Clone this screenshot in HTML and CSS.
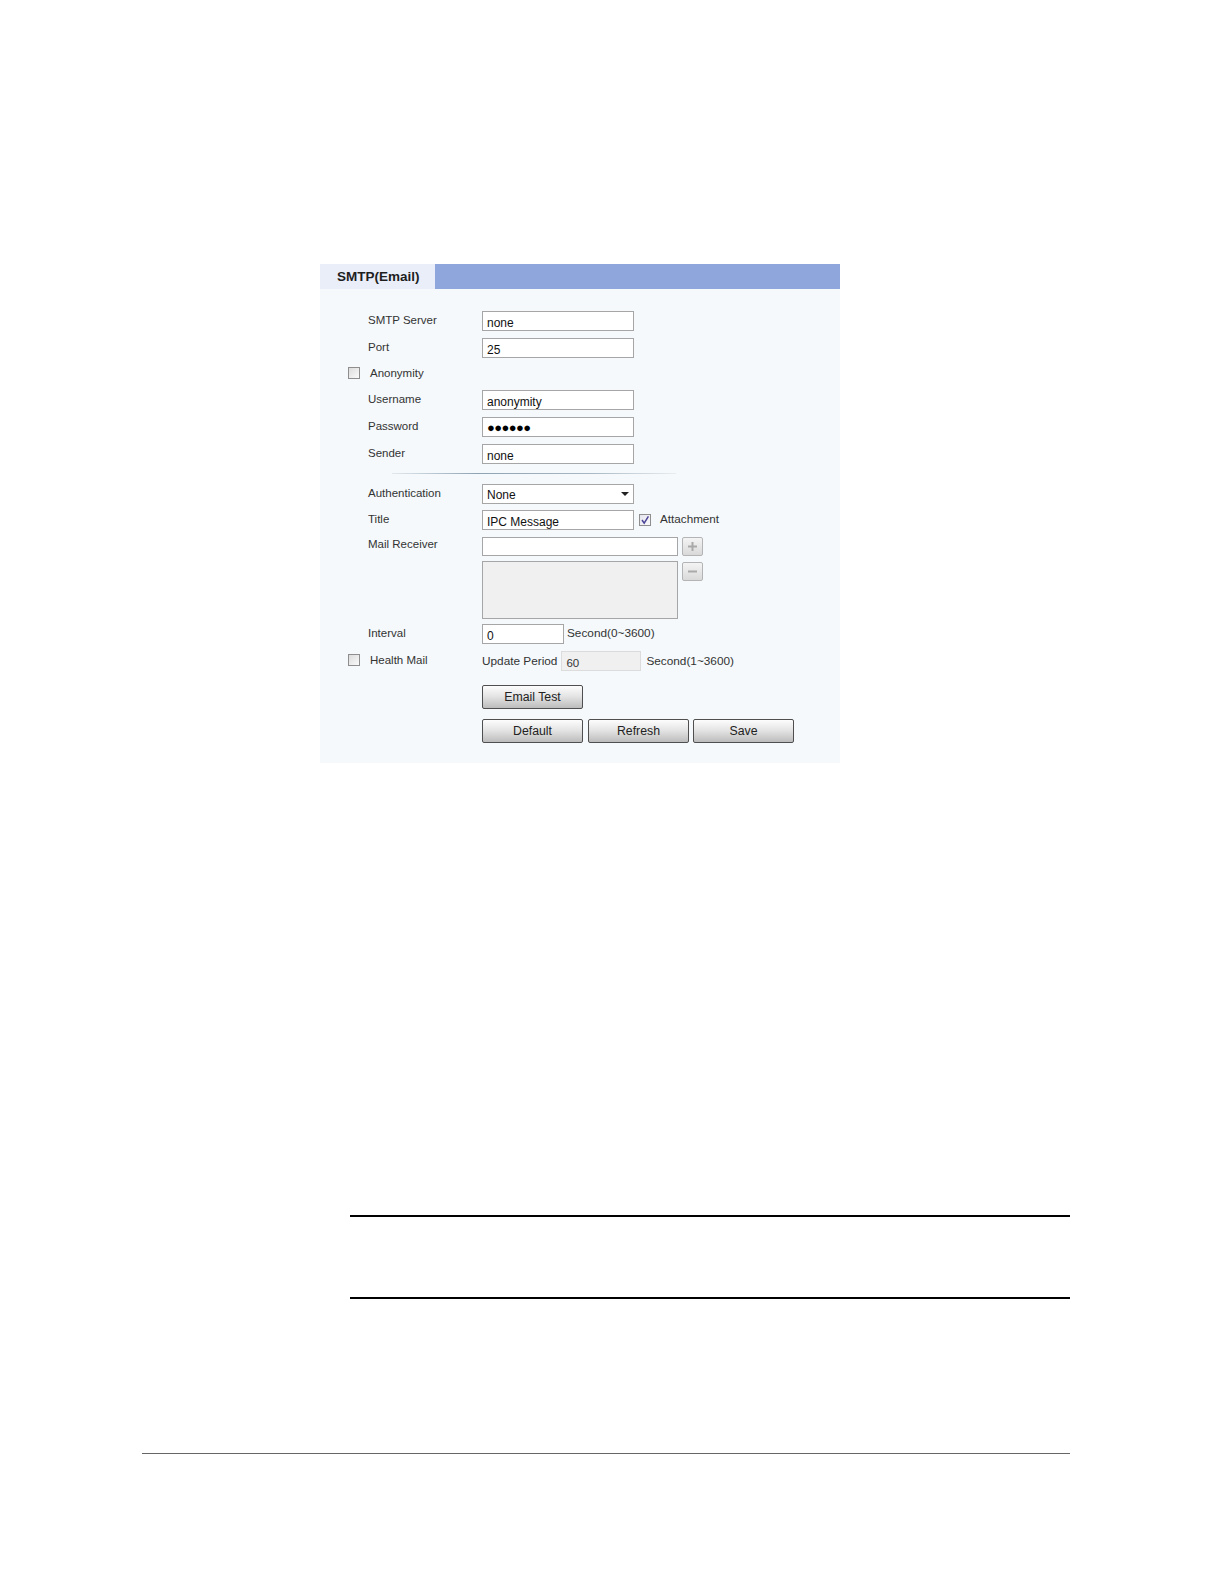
FILE: index.html
```html
<!DOCTYPE html>
<html>
<head>
<meta charset="utf-8">
<title>SMTP(Email)</title>
<link rel="stylesheet" href="styles.css">
</head>
<body>
<div class="page">
  <div class="panel">
    <div class="panel-head">
      <div class="tab">SMTP(Email)</div>
    </div>
    <div class="panel-body">
      <div class="row">
        <div class="label">SMTP Server</div>
        <div class="input w152">none</div>
      </div>
      <div class="row">
        <div class="label">Port</div>
        <div class="input w152">25</div>
      </div>
      <div class="row short">
        <div class="label check-label"><span class="cb"></span><span>Anonymity</span></div>
      </div>
      <div class="row">
        <div class="label">Username</div>
        <div class="input w152">anonymity</div>
      </div>
      <div class="row">
        <div class="label">Password</div>
        <div class="input w152 dots">&#9679;&#9679;&#9679;&#9679;&#9679;&#9679;</div>
      </div>
      <div class="row">
        <div class="label">Sender</div>
        <div class="input w152">none</div>
      </div>
      <div class="sep"></div>
      <div class="row auth">
        <div class="label">Authentication</div>
        <div class="input w152 select">None<span class="caret"></span></div>
      </div>
      <div class="row">
        <div class="label">Title</div>
        <div class="input w152">IPC Message</div>
        <span class="cb checked"><svg viewBox="0 0 10 10" width="10" height="10"><path d="M2 5 L4.2 8.2 L8.4 1.4" fill="none" stroke="#4b4597" stroke-width="1.5"/></svg></span>
        <span class="after">Attachment</span>
      </div>
      <div class="row recv">
        <div class="label">Mail Receiver</div>
        <div class="input w196"></div>
        <span class="mini"><svg viewBox="0 0 19 17" width="19" height="17"><path d="M5 8.5 H14 M9.5 4 V13" stroke="#a9a9a9" stroke-width="2"/></svg></span>
      </div>
      <div class="row list-row">
        <div class="label"></div>
        <div class="listbox"></div>
        <span class="mini"><svg viewBox="0 0 19 17" width="19" height="17"><path d="M5 8.5 H14" stroke="#a9a9a9" stroke-width="2"/></svg></span>
      </div>
      <div class="row">
        <div class="label">Interval</div>
        <div class="input w82">0</div>
        <span class="after3">Second(0~3600)</span>
      </div>
      <div class="row">
        <div class="label check-label"><span class="cb"></span><span>Health Mail</span></div>
        <span class="plain">Update Period</span>
        <div class="input w80 disabled">60</div>
        <span class="after5">Second(1~3600)</span>
      </div>
      <div class="row btn-row first">
        <div class="label"></div>
        <button class="btn">Email Test</button>
      </div>
      <div class="row btn-row">
        <div class="label"></div>
        <button class="btn">Default</button>
        <button class="btn">Refresh</button>
        <button class="btn">Save</button>
      </div>
    </div>
  </div>
  <div class="note"></div>
  <div class="footer-line"></div>
</div>
</body>
</html>
```

FILE: styles.css
```css
html, body {
  margin: 0;
  padding: 0;
  background: #ffffff;
}
.page {
  padding-top: 264px;
  font-family: "Liberation Sans", Arial, sans-serif;
}
.panel {
  margin-left: 320px;
  width: 520px;
  background: #f5f9fb;
}
.panel-head {
  height: 25px;
  background: #8fa6dc;
  display: flex;
}
.tab {
  width: 115px;
  background: #e9eef9;
  box-sizing: border-box;
  padding-left: 17px;
  font-size: 13.5px;
  font-weight: bold;
  color: #1e1e1e;
  line-height: 26px;
}
.panel-body {
  padding: 22px 0 20px 0;
}
.row {
  display: flex;
  align-items: center;
  height: 20px;
  margin-bottom: 7px;
}
.row.short {
  height: 18px;
}
.row.auth {
  height: 20px;
  margin-bottom: 6px;
}
.row.recv {
  height: 19px;
  margin-bottom: 5px;
  align-items: flex-start;
}
.row.list-row {
  height: 58px;
  align-items: flex-start;
  margin-bottom: 5px;
}
.label {
  width: 162px;
  flex: none;
  box-sizing: border-box;
  padding-left: 48px;
  font-size: 11.5px;
  color: #333;
  margin-top: -2px;
}
.recv .label {
  margin-top: 1px;
}
.check-label {
  padding-left: 28px;
  display: flex;
  align-items: center;
}
.check-label .cb {
  margin-right: 10px;
}
.input {
  height: 20px;
  box-sizing: border-box;
  border: 1px solid #a6a6a6;
  background: #fff;
  font-size: 12px;
  color: #111;
  padding: 4px 0 0 4px;
  line-height: 14px;
  position: relative;
}
.w152 { width: 152px; }
.w196 { width: 196px; height: 19px; }
.w82 { width: 82px; }
.w80 { width: 80px; }
.dots {
  font-size: 13px;
  letter-spacing: -0.6px;
  padding-top: 3px;
  color: #000;
}
.select {
  padding-top: 3px;
}
.caret {
  position: absolute;
  right: 4px;
  top: 7px;
  width: 0;
  height: 0;
  border-left: 4px solid transparent;
  border-right: 4px solid transparent;
  border-top: 4px solid #222;
}
.disabled {
  background: #f0f0f0;
  border-color: #dcdcdc;
  font-size: 11.5px;
  color: #333;
}
.cb {
  width: 12px;
  height: 12px;
  box-sizing: border-box;
  border: 1px solid #8e8e8e;
  background: linear-gradient(135deg, #dcdcdc, #fafafa);
  flex: none;
  display: inline-flex;
  align-items: center;
  justify-content: center;
}
.cb.checked {
  margin-left: 5px;
  margin-top: -1px;
  background: linear-gradient(135deg, #e4e4ee, #fafafa);
}
.after {
  margin-left: 9px;
  font-size: 11.7px;
  color: #333;
  margin-top: -3px;
}
.after3 {
  margin-left: 3px;
  font-size: 11.8px;
  color: #333;
  margin-top: -3px;
}
.after5 {
  margin-left: 5px;
  font-size: 11.8px;
  color: #333;
  margin-top: -1px;
}
.plain {
  font-size: 11.8px;
  color: #333;
  margin-right: 4px;
  margin-top: -1px;
}
.mini {
  margin-left: 4px;
  width: 21px;
  height: 19px;
  box-sizing: border-box;
  border: 1px solid #b4b4b4;
  border-radius: 2px;
  background: linear-gradient(#f4f4f4, #d9d9d9);
  display: flex;
  align-items: center;
  justify-content: center;
}
.list-row .mini {
  margin-top: 1px;
}
.listbox {
  width: 196px;
  height: 58px;
  box-sizing: border-box;
  border: 1px solid #a6a6a6;
  background: #f0f0f0;
}
.sep {
  margin: 9px 0 10px 72px;
  width: 284px;
  height: 1px;
  background: linear-gradient(to right, rgba(150,170,185,0.2), #8fa3b3 30%, #a9b8c3 70%, rgba(180,190,200,0.2));
}
.btn-row {
  height: 24px;
  margin-bottom: 10px;
}
.btn-row.first {
  margin-top: 14px;
}
.btn {
  width: 101px;
  height: 24px;
  margin: 0 5px 0 0;
  padding: 0;
  border: 1px solid #4f4f4f;
  border-radius: 2px;
  background: linear-gradient(#fdfdfd, #e2e2e2 50%, #bcbcbc);
  font-family: "Liberation Sans", Arial, sans-serif;
  font-size: 12.3px;
  color: #222;
  line-height: 20px;
}
.btn-row .btn:nth-child(4) {
  margin-left: -1px;
}
.row.btn-row:last-child {
  margin-bottom: 0;
}
.note {
  margin-left: 350px;
  width: 720px;
  height: 80px;
  margin-top: 452px;
  border-top: 2px solid #000;
  border-bottom: 2px solid #000;
}
.footer-line {
  margin-left: 142px;
  width: 928px;
  height: 1px;
  margin-top: 154px;
  background: #666;
}
```
